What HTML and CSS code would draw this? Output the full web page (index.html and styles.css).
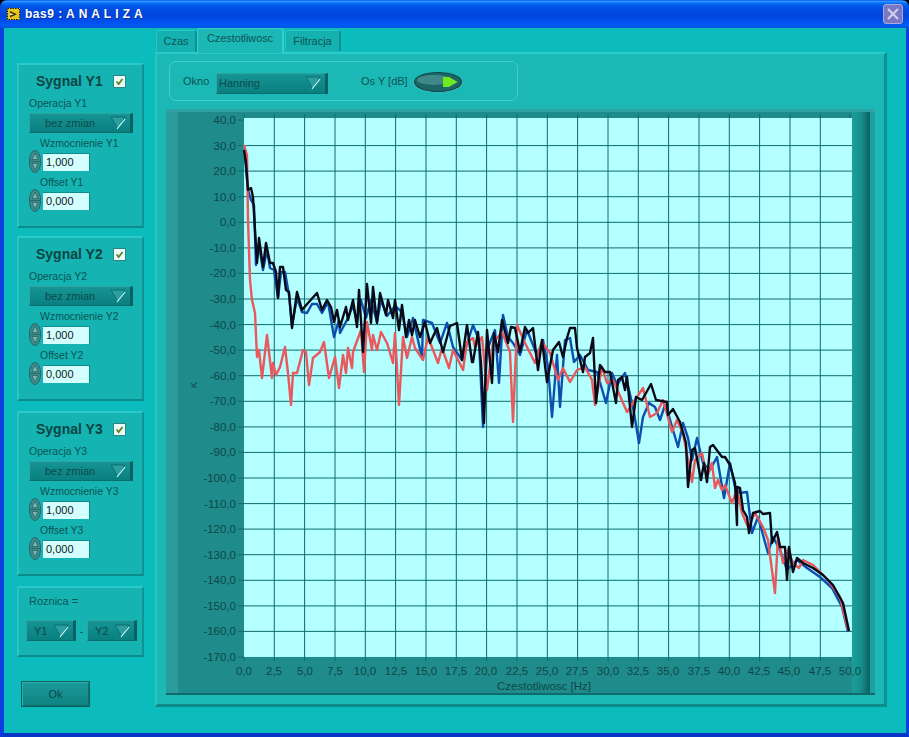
FILE: index.html
```html
<!DOCTYPE html>
<html lang="pl">
  <head>
    <meta charset="UTF-8" />
    <title>bas9 : A N A L I Z A</title>
    <link rel="stylesheet" href="styles.css">
  </head>
  <body>
    <!-- shared little shapes -->
    <svg class="defs" width="0" height="0">
      <symbol id="arrow" viewBox="0 0 16 14">
        <path d="M1 1H15L8 13Z" fill="#2a9f9f" stroke="#0b6f70" />
        <path d="M7 13L15 3" stroke="#d8ffff" stroke-width="1.2" />
      </symbol>
      <symbol id="spin" viewBox="0 0 12 23">
        <ellipse cx="6" cy="11.5" rx="5.6" ry="11" fill="#3f8c8c" stroke="#1d6a6a" />
        <path d="M6 3L9 9.5H3Z" fill="#79b5b3" stroke="#245f5f" stroke-width=".7" />
        <path d="M6 20L9 13.5H3Z" fill="#79b5b3" stroke="#245f5f" stroke-width=".7" />
        <path d="M1 11.5H11" stroke="#245f5f" stroke-width=".8" />
      </symbol>
      <symbol id="check" viewBox="0 0 13 13">
        <path d="M3 6.5L5.5 9.5L10 3.5" fill="none" stroke="#5f7d22" stroke-width="2" />
      </symbol>
    </svg>

    <div class="window">
      <div class="titlebar">
        <svg class="appIcon" width="13" height="12" viewBox="0 0 13 12">
          <rect width="13" height="12" fill="#e8c820" />
          <rect x=".5" y=".5" width="12" height="11" fill="none" stroke="#1c1808" stroke-dasharray="1.5 1" />
          <path d="M3 3L10 6.2L3 9.5Z" fill="#3a2c08" />
          <path d="M3 5L7 6.2L3 7.6Z" fill="#fff1a0" />
        </svg>
        <div class="titleText">bas9 : A N A L I Z A</div>
        <div class="closeBtn">
          <svg width="14" height="14" viewBox="0 0 14 14">
            <path d="M2 2L12 12M12 2L2 12" stroke="#cfcfea" stroke-width="2.2" />
          </svg>
        </div>
      </div>

      <div class="client">
        <div class="sidebar">
          <div class="panel signal">
            <div class="signalHead">
              <div class="signalName">Sygnal Y1</div>
              <div class="checkbox"><svg width="11" height="11"><use href="#check" /></svg></div>
            </div>
            <div class="label">Operacja Y1</div>
            <div class="ring wide"><span>bez zmian</span><svg width="16" height="14"><use href="#arrow" /></svg></div>
            <div class="label sub">Wzmocnienie Y1</div>
            <div class="numeric"><svg width="12" height="23"><use href="#spin" /></svg><div class="numBox">1,000</div></div>
            <div class="label sub tight">Offset Y1</div>
            <div class="numeric"><svg width="12" height="23"><use href="#spin" /></svg><div class="numBox">0,000</div></div>
          </div>

          <div class="panel signal">
            <div class="signalHead">
              <div class="signalName">Sygnal Y2</div>
              <div class="checkbox"><svg width="11" height="11"><use href="#check" /></svg></div>
            </div>
            <div class="label">Operacja Y2</div>
            <div class="ring wide"><span>bez zmian</span><svg width="16" height="14"><use href="#arrow" /></svg></div>
            <div class="label sub">Wzmocnienie Y2</div>
            <div class="numeric"><svg width="12" height="23"><use href="#spin" /></svg><div class="numBox">1,000</div></div>
            <div class="label sub tight">Offset Y2</div>
            <div class="numeric"><svg width="12" height="23"><use href="#spin" /></svg><div class="numBox">0,000</div></div>
          </div>

          <div class="panel signal third">
            <div class="signalHead">
              <div class="signalName">Sygnal Y3</div>
              <div class="checkbox"><svg width="11" height="11"><use href="#check" /></svg></div>
            </div>
            <div class="label">Operacja Y3</div>
            <div class="ring wide"><span>bez zmian</span><svg width="16" height="14"><use href="#arrow" /></svg></div>
            <div class="label sub">Wzmocnienie Y3</div>
            <div class="numeric"><svg width="12" height="23"><use href="#spin" /></svg><div class="numBox">1,000</div></div>
            <div class="label sub tight">Offset Y3</div>
            <div class="numeric"><svg width="12" height="23"><use href="#spin" /></svg><div class="numBox">0,000</div></div>
          </div>

          <div class="panel diff">
            <div class="label">Roznica =</div>
            <div class="diffRow">
              <div class="ring small"><span>Y1</span><svg width="16" height="14"><use href="#arrow" /></svg></div>
              <div class="minus">-</div>
              <div class="ring small"><span>Y2</span><svg width="16" height="14"><use href="#arrow" /></svg></div>
            </div>
          </div>

          <div class="okBtn">Ok</div>
        </div>

        <div class="tabArea">
          <div class="tabs">
            <div class="tab first">Czas</div>
            <div class="tab active">Czestotliwosc</div>
            <div class="tab last">Filtracja</div>
          </div>
          <div class="tabPanel">
            <div class="group">
              <div class="groupLabel">Okno</div>
              <div class="ring window-select"><span>Hanning</span><svg width="16" height="14"><use href="#arrow" /></svg></div>
              <div class="groupLabel axisLabel">Os Y [dB]</div>
              <svg class="toggle" width="50" height="22" viewBox="0 0 50 22">
                <ellipse cx="25" cy="11.5" rx="24.5" ry="10" fill="#5fc4c0" />
                <ellipse cx="25" cy="11" rx="23.5" ry="9.5" fill="#1e6567" stroke="#0f4a4c" stroke-width="1.2" />
                <ellipse cx="21" cy="9" rx="17" ry="5" fill="#3f8a88" />
                <path d="M30 6H36L44.5 11L36 16H30Z" fill="#6eea20" />
              </svg>
            </div>

            <svg class="graph" width="709" height="586" viewBox="166 109 709 586">
              <defs>
                <linearGradient id="rightBand" x1="0" x2="1" y1="0" y2="0">
                  <stop offset="0" stop-color="#1c9d9a" />
                  <stop offset="0.5" stop-color="#17908e" />
                  <stop offset="1" stop-color="#0a5f60" />
                </linearGradient>
              </defs>
              <rect class="frame" x="166" y="109" width="709" height="586" />
              <rect class="frameLight" x="166" y="109" width="12" height="586" />
              <rect class="frameEdge" x="166" y="109" width="709" height="3" />
              <rect class="frameDark" x="166" y="693" width="709" height="2" />
              <rect x="852" y="112" width="18" height="581" fill="url(#rightBand)" />
              <rect class="frameRim" x="870" y="112" width="5" height="581" />
              <rect class="plot" x="244" y="118" width="608" height="539" />

              <path class="grid" d="M244 114V118M244 657V661M850 114V118M850 657V661M274.3 114V661M304.6 114V661M335 114V661M365.3 114V661M395.6 114V661M426 114V661M456.3 114V661M486.6 114V661M517 114V661M547.3 114V661M577.6 114V661M608 114V661M638.3 114V661M668.6 114V661M699 114V661M729.3 114V661M759.6 114V661M790 114V661M820.3 114V661
                M238 120H244M238 657H244M238 145.6H852M238 171.1H852M238 196.7H852M238 222.3H852M238 247.9H852M238 273.4H852M238 299H852M238 324.6H852M238 350.1H852M238 375.7H852M238 401.3H852M238 426.9H852M238 452.4H852M238 478H852M238 503.6H852M238 529.1H852M238 554.7H852M238 580.3H852M238 605.9H852M238 631.4H852" />

              <g class="yLabels">
                <text x="236" y="124">40,0</text>
                <text x="236" y="150">30,0</text>
                <text x="236" y="175">20,0</text>
                <text x="236" y="201">10,0</text>
                <text x="236" y="226">0,0</text>
                <text x="236" y="252">-10,0</text>
                <text x="236" y="277">-20,0</text>
                <text x="236" y="303">-30,0</text>
                <text x="236" y="329">-40,0</text>
                <text x="236" y="354">-50,0</text>
                <text x="236" y="380">-60,0</text>
                <text x="236" y="405">-70,0</text>
                <text x="236" y="431">-80,0</text>
                <text x="236" y="456">-90,0</text>
                <text x="236" y="482">-100,0</text>
                <text x="236" y="508">-110,0</text>
                <text x="236" y="533">-120,0</text>
                <text x="236" y="559">-130,0</text>
                <text x="236" y="584">-140,0</text>
                <text x="236" y="610">-150,0</text>
                <text x="236" y="635">-160,0</text>
                <text x="236" y="661">-170,0</text>
              </g>
              <g class="xLabels">
                <text x="244" y="675">0,0</text>
                <text x="274" y="675">2,5</text>
                <text x="305" y="675">5,0</text>
                <text x="335" y="675">7,5</text>
                <text x="365" y="675">10,0</text>
                <text x="396" y="675">12,5</text>
                <text x="426" y="675">15,0</text>
                <text x="456" y="675">17,5</text>
                <text x="486" y="675">20,0</text>
                <text x="517" y="675">22,5</text>
                <text x="547" y="675">25,0</text>
                <text x="577" y="675">27,5</text>
                <text x="608" y="675">30,0</text>
                <text x="638" y="675">32,5</text>
                <text x="668" y="675">35,0</text>
                <text x="699" y="675">37,5</text>
                <text x="729" y="675">40,0</text>
                <text x="759" y="675">42,5</text>
                <text x="789" y="675">45,0</text>
                <text x="820" y="675">47,5</text>
                <text x="850" y="675">50,0</text>
                <text x="544" y="690">Czestotliwosc [Hz]</text>
              </g>
              <text class="yTitle" transform="translate(197 388) rotate(-90)">K</text>

              <!-- traces, in page pixels -->
              <polyline class="trace blue" points="245,158 248,190 251,200 254,205 256,265 259,245 263,270 267,250 270,268 274,270 278,298 281,272 285,272 289,295 292,325 297,298 302,312 307,313 312,304 317,304 322,313 328,302 334,337 339,320 340,333 348,318 353,305 357,322 361,300 366,318 371,300 377,322 381,300 387,316 395,306 402,312 407,337 413,318 422,358 423,320 432,323 440,343 447,323 453,347 462,360 473,325 479,340 483,427 487,350 495,330 499,383 503,315 508,337 513,343 520,355 527,330 537,355 543,340 548,367 552,417 557,355 560,407 565,340 570,338 574,362 580,355 588,370 597,372 606,403 612,373 617,385 625,373 633,407 639,443 643,417 649,403 655,407 660,420 665,405 668,413 678,447 683,423 688,438 692,460 697,438 703,463 710,470 717,457 724,498 730,463 735,487 740,493 747,492 752,533 758,517 768,553 773,537 780,550 787,570 797,560 807,568 820,577 832,588 842,607 848,632" />
              <polyline class="trace red" points="244,145 247,155 248,220 250,280 252,300 255,313 257,357 259,350 262,378 267,335 272,378 273,363 276,375 280,367 285,347 288,373 291,405 293,373 297,373 303,350 306,352 309,385 313,358 320,352 324,342 329,378 335,357 339,388 343,355 346,373 348,348 352,368 353,352 361,330 364,372 367,322 372,350 373,335 377,350 381,332 387,343 393,363 395,333 399,405 403,337 407,358 412,337 415,348 423,360 428,337 438,363 442,348 449,368 453,350 463,370 467,342 473,338 475,347 482,337 487,390 493,343 502,332 510,352 513,422 517,325 525,343 535,363 542,342 550,353 558,380 563,368 570,382 577,370 585,367 592,380 595,405 602,367 607,383 613,380 627,412 633,403 643,388 650,417 657,413 663,400 672,432 677,420 683,433 692,482 695,460 702,453 707,477 712,463 715,488 718,480 722,490 725,485 732,503 737,490 742,513 748,527 755,513 763,527 768,540 775,593 778,537 783,563 788,550 793,563 799,568 803,560 813,565 828,580 840,597 848,630" />
              <polyline class="trace black" points="244,150 246,163 248,190 251,188 253,197 255,230 257,263 259,238 263,267 266,243 270,263 273,263 276,272 278,298 280,267 283,267 286,290 289,292 292,328 297,292 302,310 308,303 317,293 322,310 327,300 331,307 334,322 337,310 340,327 346,307 348,320 353,300 357,327 359,290 363,352 367,284 371,323 373,287 377,323 380,293 386,315 388,300 393,318 395,300 399,330 402,305 406,337 409,320 412,335 415,320 420,337 425,322 430,343 437,328 443,352 450,326 457,323 462,360 467,325 472,362 473,362 478,332 481,363 484,423 487,330 492,383 494,333 498,352 502,320 508,343 511,327 515,328 520,352 525,327 528,333 533,328 538,370 542,340 547,382 553,350 559,342 563,357 567,338 570,328 575,328 577,348 583,372 585,357 590,353 593,338 596,403 600,365 605,372 610,372 616,403 618,380 622,377 625,390 627,377 632,427 636,397 642,400 646,393 651,384 656,400 667,402 668,415 673,409 680,422 686,443 688,487 692,450 695,448 701,480 704,463 707,482 710,447 713,445 722,457 725,457 730,465 735,483 737,525 737,487 740,488 743,510 747,517 749,533 753,513 760,511 763,514 770,513 772,543 777,532 780,547 785,547 787,580 789,547 793,572 797,558 803,563 813,568 823,575 833,585 843,603 849,631" />
            </svg>
          </div>
        </div>
      </div>
    </div>
  </body>
</html>
```

FILE: styles.css
```css
* {
  box-sizing: border-box;
}
html,
body {
  margin: 0;
  background: #000;
}
body {
  font-family: "Liberation Sans", Arial, sans-serif;
  font-size: 11px;
  color: #0c5454;
}

.defs {
  display: block;
  height: 0;
}

.window {
  display: flex;
  flex-direction: column;
  width: 909px;
  height: 737px;
  border-radius: 7px 7px 0 0;
  overflow: hidden;
}

.titlebar {
  display: flex;
  align-items: center;
  flex: none;
  height: 28px;
  padding: 0 6px 0 7px;
  background: linear-gradient(#0058ee 0%, #3593ff 5%, #127dff 9%, #0262ee 15%, #0050e3 28%, #0046dc 55%, #0050ee 78%, #005cf5 90%, #0052d6 100%);
}
.appIcon {
  flex: none;
}
.titleText {
  flex: 1;
  margin-left: 5px;
  color: #fff;
  font-size: 12px;
  font-weight: bold;
  letter-spacing: 0.5px;
  text-shadow: 1px 1px 0 #0a2f9e;
}
.closeBtn {
  display: flex;
  align-items: center;
  justify-content: center;
  width: 20px;
  height: 20px;
  border: 1px solid #a9a9dc;
  border-radius: 3px;
  background: #7a78c4;
}

.client {
  display: flex;
  flex: 1;
  border-left: 4px solid #0a3ee0;
  border-right: 3px solid #0a3ee0;
  border-bottom: 4px solid #0a36c8;
  background: #0cbcbc;
}

.sidebar {
  flex: none;
  width: 127px;
  margin-left: 13px;
  padding-top: 35px;
}

.panel {
  width: 127px;
  border: 2px solid;
  border-color: #2ccaca #0f9494 #0d8a8a #2bc4c4;
  background: #15b3b1;
}
.signal {
  height: 165px;
  margin-bottom: 8px;
  padding: 7px 0 0 10px;
}
.third {
  margin-top: 10px;
  margin-bottom: 10px;
}
.diff {
  height: 71px;
  padding: 6px 0 0 7px;
}
.diff .label {
  padding-left: 3px;
  font-size: 11px;
}

.signalHead {
  display: flex;
  align-items: center;
  height: 18px;
  margin-bottom: 6px;
  padding-left: 7px;
}
.signalName {
  width: 77px;
  color: #0d4545;
  font-size: 14px;
  font-weight: bold;
}
.checkbox {
  display: flex;
  width: 13px;
  height: 13px;
  border: 1px solid #2d8484;
  background: #e9fbf6;
}

.label {
  height: 14px;
  font-size: 10.5px;
  line-height: 14px;
  white-space: nowrap;
}
.sub {
  margin-top: 3px;
  padding-left: 11px;
}
.tight {
  margin-top: 2px;
}

.ring {
  display: flex;
  align-items: center;
  justify-content: space-between;
  border-top: 1px solid #2da5a5;
  border-left: 1px solid #2da5a5;
  border-right: 3px solid #0a6161;
  border-bottom: 1px solid #0a6c6c;
  background: linear-gradient(#169494, #0a7f80);
  color: #0c4a4a;
}
.ring svg {
  flex: none;
  margin-right: 4px;
}
.wide {
  width: 104px;
  height: 20px;
  margin-top: 3px;
  padding-left: 15px;
}
.small {
  width: 50px;
  height: 21px;
  padding-left: 7px;
}
.window-select {
  width: 112px;
  height: 21px;
  margin: 4px 0 0 8px;
  padding-left: 2px;
}

.numeric {
  display: flex;
  align-items: center;
  height: 23px;
}
.numBox {
  width: 47px;
  height: 18px;
  margin-left: 2px;
  padding-left: 3px;
  border-top: 1px solid #0e8c8c;
  border-right: 1px solid #0e8c8c;
  background: #d4ffff;
  color: #101818;
  font-size: 11px;
  line-height: 17px;
}

.diffRow {
  display: flex;
  align-items: center;
  margin-top: 12px;
}
.minus {
  width: 11px;
  text-align: center;
}

.okBtn {
  display: flex;
  align-items: center;
  justify-content: center;
  width: 69px;
  height: 26px;
  margin: 24px 0 0 4px;
  border: 1px solid #0b5f5f;
  box-shadow: inset 1px 1px #2fb0b0, inset -1px -1px #0a7070;
  background: linear-gradient(#1a9a9a, #0f8383);
  color: #0c4a4a;
}

.tabArea {
  display: flex;
  flex-direction: column;
  width: 732px;
  margin: 1px 0 0 11px;
}
.tabs {
  display: flex;
  align-items: flex-start;
  height: 23px;
}
.tab {
  height: 21px;
  margin-top: 1px;
  padding-top: 4px;
  border-top: 1px solid #2ac6c6;
  border-left: 1px solid #2ac6c6;
  border-right: 2px solid #0f9090;
  border-radius: 3px 3px 0 0;
  background: #15b1b0;
  text-align: center;
}
.first {
  width: 41px;
  margin-left: 1px;
  height: 23px;
}
.active {
  position: relative;
  width: 87px;
  height: 25px;
  margin-top: -1px;
  padding-top: 3px;
  background: #1cb8b6;
  border-color: #34d0d0;
  letter-spacing: -0.1px;
}
.last {
  width: 56px;
  margin-left: 1px;
}

.tabPanel {
  width: 732px;
  height: 655px;
  padding: 7px 0 0 9px;
  border: 2px solid;
  border-color: #2ccaca #0f9292 #0d8a8a #2bc4c4;
  border-right-width: 3px;
  border-bottom-width: 3px;
  background: #1cb8b6;
}

.group {
  display: flex;
  align-items: center;
  width: 349px;
  height: 40px;
  margin-left: 3px;
  padding-left: 13px;
  border: 1px solid #3fcfcf;
  border-radius: 7px;
}
.groupLabel {
  width: 25px;
  white-space: nowrap;
}
.axisLabel {
  width: 45px;
  margin-left: 33px;
}
.toggle {
  flex: none;
  margin: 2px 0 0 7px;
}

.graph {
  display: block;
  margin-top: 8px;
}
.frame {
  fill: #1f8b8b;
}
.frameLight {
  fill: #2a9c9c;
}
.frameEdge {
  fill: #2fa3a3;
}
.frameDark {
  fill: #0e6b6b;
}
.frameRim {
  fill: #1da0a0;
}
.plot {
  fill: #b4ffff;
}
.grid {
  fill: none;
  stroke: #0e6c6c;
  stroke-width: 1;
}
.yLabels text,
.xLabels text,
.yTitle {
  fill: #0e4847;
  font-size: 11.5px;
}
.yLabels text {
  text-anchor: end;
}
.xLabels text {
  text-anchor: middle;
}
.yTitle {
  font-size: 9px;
}
.trace {
  fill: none;
  stroke-width: 2.4;
  stroke-linejoin: round;
}
.blue {
  stroke: #0d4fae;
}
.red {
  stroke: #e8585c;
}
.black {
  stroke: #0a0a18;
}
```
